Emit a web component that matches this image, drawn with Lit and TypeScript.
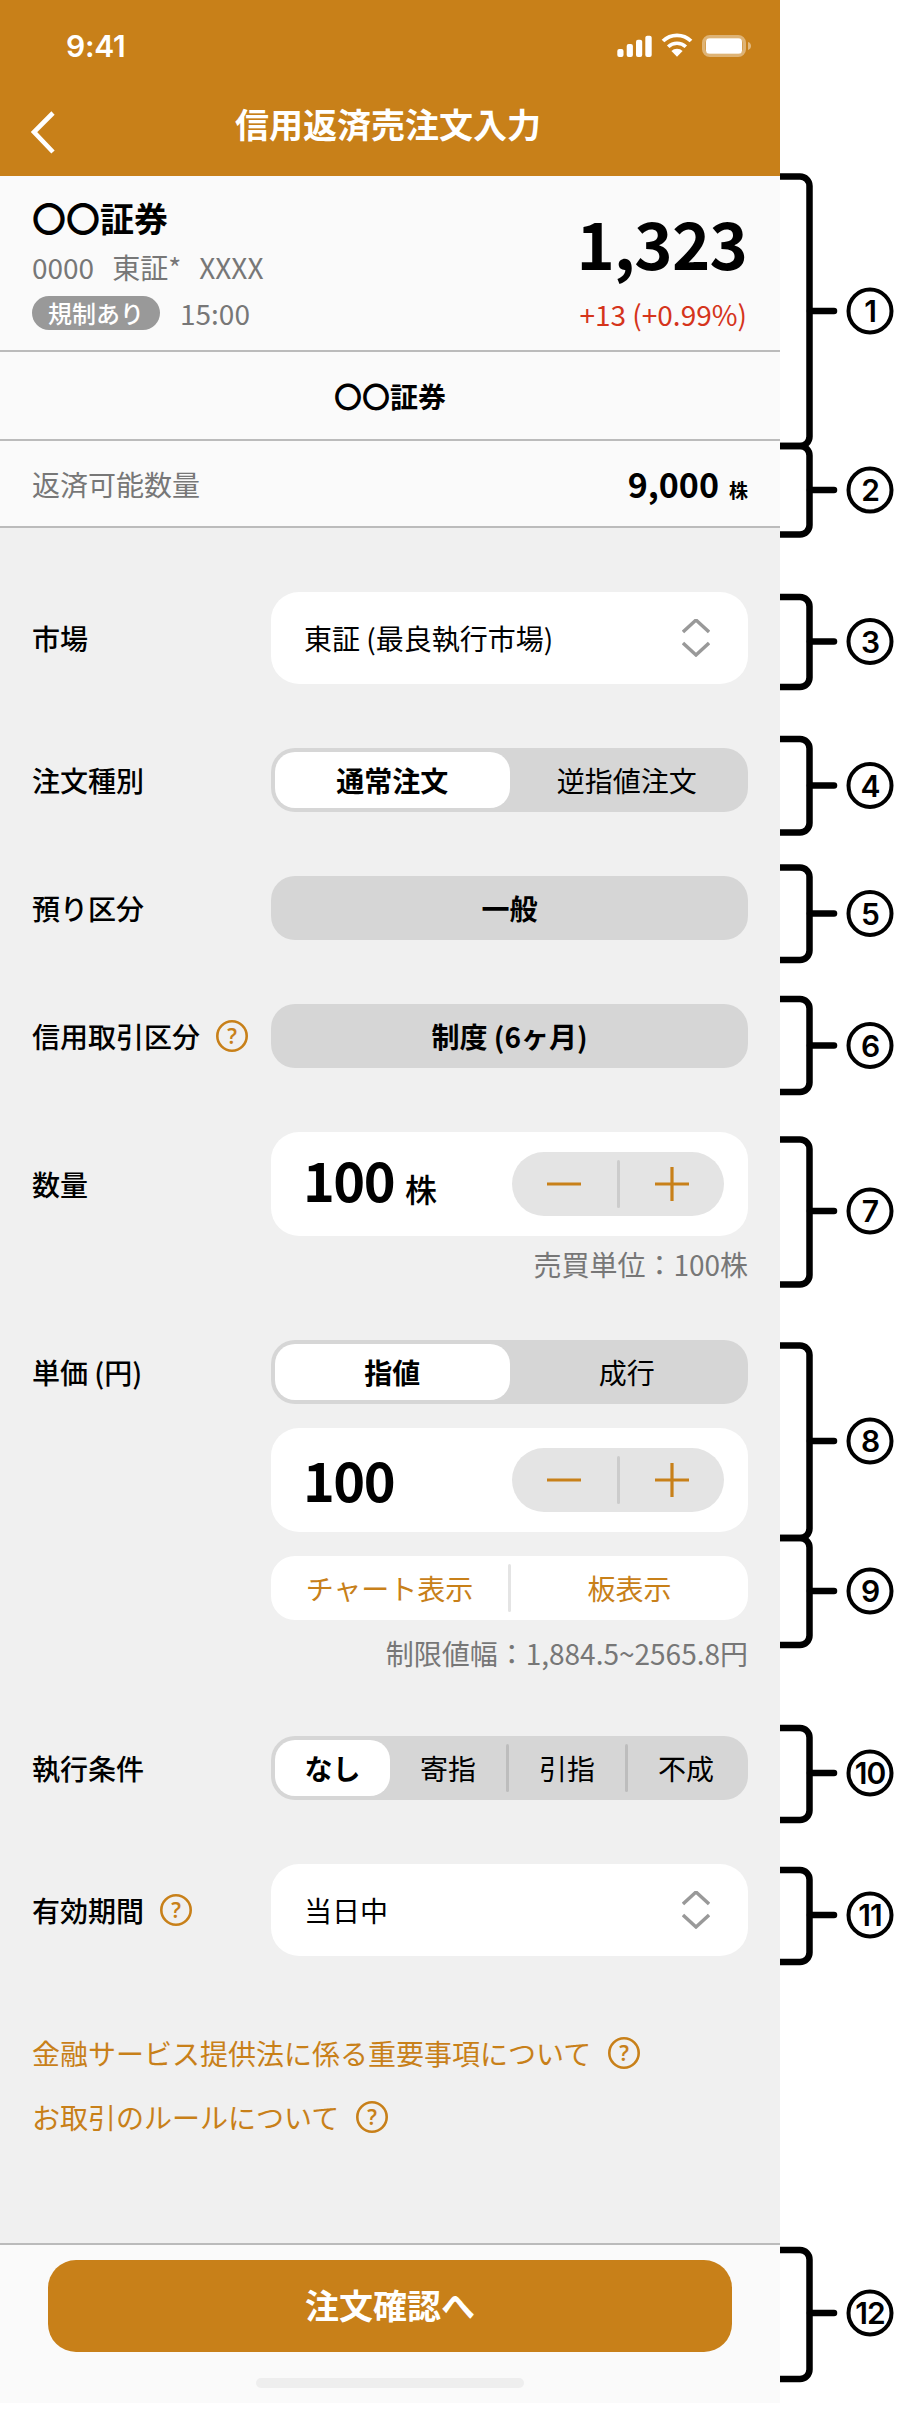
import { LitElement, html, css, svg } from "lit";
import { customElement } from "lit/decorators.js";

const MARKS = [
  { n: "1", t: 176.5, b: 446, m: 311 },
  { n: "2", t: 446, b: 534.5, m: 490 },
  { n: "3", t: 597, b: 687, m: 641.5 },
  { n: "4", t: 739, b: 832.5, m: 785.5 },
  { n: "5", t: 867.5, b: 960, m: 913.5 },
  { n: "6", t: 999, b: 1092, m: 1045.5 },
  { n: "7", t: 1139.5, b: 1284.5, m: 1211 },
  { n: "8", t: 1345.5, b: 1538, m: 1441 },
  { n: "9", t: 1538, b: 1645, m: 1591 },
  { n: "10", t: 1728, b: 1820, m: 1773 },
  { n: "11", t: 1870, b: 1962, m: 1915 },
  { n: "12", t: 2250, b: 2379, m: 2313 },
];

@customElement("app-root")
export class AppRoot extends LitElement {
  static styles = css`
    :host { display: block; width: 916px; height: 2410px; background: #fff; font-family: "Noto Sans CJK JP", "Noto Sans", sans-serif; color: #000; }
    * { box-sizing: border-box; }
    .page { display: flex; align-items: flex-start; }
    .panel { width: 780px; height: 2403px; display: flex; flex-direction: column; background: #f0f0f0; }
    .rail { width: 136px; height: 2410px; flex: none; display: block; }
    .rail .br { fill: none; stroke: #000; stroke-width: 6.5; stroke-linecap: butt; }
    .rail .tick { fill: none; stroke: #000; stroke-width: 6.5; stroke-linecap: round; }
    .rail .ring { fill: #fff; stroke: #000; stroke-width: 4; }
    .rail text { font-family: Inter, sans-serif; font-weight: 600; font-size: 30px; fill: #000; text-anchor: middle; dominant-baseline: central; letter-spacing: -1px; }

    .header { height: 176px; background: #c88019; color: #fff; display: flex; flex-direction: column; flex: none; }
    .status { height: 92px; display: flex; justify-content: space-between; padding: 30px 28px 0 66px; }
    .time { font-family: Inter, sans-serif; font-weight: 600; font-size: 30px; line-height: 32px; letter-spacing: -0.3px; }
    .sys { width: 135px; height: 26px; margin-top: 3px; display: block; flex: none; }
    .nav { height: 84px; display: flex; align-items: flex-start; padding-left: 30px; }
    .back { width: 26px; height: 44px; margin-top: 19px; flex: none; }
    .title { flex: 1; text-align: center; font-size: 34px; font-weight: 700; line-height: 50px; margin: 7px 4px 0 -56px; }

    .quote { background: #fafafa; height: 176px; flex: none; border-bottom: 2px solid #bbb; display: flex; justify-content: space-between; padding: 20px 33px 0 32px; }
    .qleft { display: flex; flex-direction: column; }
    .name { font-size: 34px; font-weight: 700; line-height: 44px; }
    .meta { font-size: 28px; line-height: 36px; color: #777; margin-top: 9px; display: flex; gap: 18px; white-space: pre; }
    .statusrow { display: flex; align-items: center; gap: 20px; margin-top: 11px; color: #777; font-size: 28px; line-height: 34px; }
    .pill { height: 34px; width: 128px; border-radius: 17px; background: #999; color: #fff; font-size: 24px; line-height: 34px; text-align: center; font-weight: 500; }
    .qright { display: flex; flex-direction: column; align-items: flex-end; }
    .price { font-size: 65px; font-weight: 700; line-height: 72px; margin-top: 10px; letter-spacing: -0.8px; }
    .chg { font-size: 28px; line-height: 36px; color: #d5341b; margin-top: 18px; }

    .broker { height: 89px; flex: none; background: #fafafa; border-bottom: 2px solid #bbb; display: flex; align-items: center; justify-content: center; font-size: 28px; font-weight: 700; }
    .avail { height: 87px; flex: none; background: #fafafa; border-bottom: 2px solid #bbb; display: flex; align-items: center; justify-content: space-between; padding: 0 32px; color: #777; font-size: 28px; }
    .avail .v { color: #000; font-weight: 700; font-size: 34px; display: flex; align-items: baseline; gap: 10px; }
    .avail .u { font-size: 19px; }

    .form { flex: 1; display: flex; flex-direction: column; gap: 64px; padding: 64px 32px 0 32px; }
    .row { display: grid; grid-template-columns: 239px 477px; align-items: start; }
    .label { height: 64px; display: flex; align-items: center; gap: 16px; font-size: 28px; font-weight: 500; line-height: 40px; }
    .label.tall { height: 92px; }
    .label.big { height: 104px; }
    .stack { display: flex; flex-direction: column; gap: 24px; }
    .q { width: 32px; height: 32px; flex: none; display: block; }
    .q circle { fill: none; stroke: #c88019; stroke-width: 2.6; }
    .q text { fill: #c88019; font-size: 21px; font-weight: 600; text-anchor: middle; font-family: "Noto Sans", sans-serif; }

    .select { height: 92px; background: #fff; border-radius: 28px; display: flex; align-items: center; justify-content: space-between; padding: 0 38px 0 33px; font-size: 28px; }
    .chev { width: 28px; height: 38px; display: block; }
    .chev path { fill: none; stroke: #999; stroke-width: 3.4; }

    .seg { height: 64px; background: #d6d6d6; border-radius: 24px; padding: 4px; display: flex; align-items: center; font-size: 28px; }
    .opt { flex: 1; height: 56px; display: flex; align-items: center; justify-content: center; }
    .opt.on { background: #fff; border-radius: 20px; font-weight: 700; }
    .opt.w115 { flex: none; width: 115px; }
    .sep { flex: none; width: 3px; height: 48px; border-radius: 2px; background: #bdbdbd; }
    .fixed { height: 64px; background: #d6d6d6; border-radius: 24px; display: flex; align-items: center; justify-content: center; font-size: 28px; font-weight: 700; }

    .num { height: 104px; background: #fff; border-radius: 28px; display: flex; align-items: center; justify-content: space-between; padding: 0 24px 0 32px; }
    .val { font-size: 54px; font-weight: 700; line-height: 64px; display: flex; align-items: baseline; gap: 11px; letter-spacing: -1.5px; margin-top: -2px; }
    .val .u { font-size: 32px; font-weight: 500; letter-spacing: 0; }
    .stepper { width: 212px; height: 64px; border-radius: 32px; background: #e4e4e4; display: flex; align-items: center; }
    .stepper .sep { background: #ccc; }
    .sb { flex: 1; display: flex; align-items: center; justify-content: center; }
    .sb svg { width: 34px; height: 34px; display: block; }
    .sb path { stroke: #c88019; stroke-width: 3.2; fill: none; }

    .links { height: 64px; background: #fff; border-radius: 24px; display: flex; align-items: center; font-size: 28px; color: #c88019; }
    .links .l { flex: 1; text-align: center; }
    .links .sep { background: #e4e4e4; }
    .cap { text-align: right; color: #777; font-size: 28px; }
    .cap.a { line-height: 24px; margin-top: 16px; }
    .cap.b { line-height: 38px; margin-top: -10px; }

    .help { display: flex; flex-direction: column; gap: 24px; margin-top: 13px; }
    .hl { display: flex; align-items: center; gap: 17px; height: 40px; color: #c88019; font-size: 28px; }

    .footer { height: 160px; flex: none; background: #fafafa; border-top: 2px solid #bbb; display: flex; flex-direction: column; align-items: center; padding-top: 15px; }
    .cta { width: 684px; height: 92px; border-radius: 28px; background: #c88019; color: #fff; font-size: 34px; font-weight: 700; line-height: 46px; display: flex; align-items: center; justify-content: center; padding-bottom: 2px; }
    .home { width: 268px; height: 10px; border-radius: 5px; background: #eee; margin-top: 26px; }
  `;

  private q() {
    return html`<svg class="q" viewBox="0 0 32 32"><circle cx="16" cy="16" r="14.7"></circle><text x="16" y="23.5">?</text></svg>`;
  }
  private chev() {
    return html`<svg class="chev" viewBox="0 0 28 38"><path d="M1 13 L14 1 L27 13"></path><path d="M1 24 L14 36 L27 24"></path></svg>`;
  }
  private stepper() {
    return html`<div class="stepper">
      <div class="sb"><svg viewBox="0 0 34 34"><path d="M0 17H34"></path></svg></div>
      <div class="sep"></div>
      <div class="sb"><svg viewBox="0 0 34 34"><path d="M0 17H34M17 0V34"></path></svg></div>
    </div>`;
  }
  private rail() {
    return html`<svg class="rail" viewBox="0 0 136 2410">
      ${MARKS.map(
        (k) => svg`
        <path class="br" d="M0 ${k.t} H20 a9.5 9.5 0 0 1 9.5 9.5 V${k.b - 9.5} a9.5 9.5 0 0 1 -9.5 9.5 H0"></path>
        <path class="tick" d="M30 ${k.m} H54"></path>
        <circle class="ring" cx="90" cy="${k.m}" r="21.5"></circle>
        <text x="90" y="${k.m}">${k.n}</text>`
      )}
    </svg>`;
  }

  render() {
    return html`<div class="page">
      <div class="panel">
        <div class="header">
          <div class="status">
            <div class="time">9:41</div>
            <svg class="sys" viewBox="0 0 135 26">
              <g fill="#fff">
                <rect x="0.3" y="16" width="6.2" height="8" rx="2"></rect>
                <rect x="9.7" y="11" width="6.2" height="13" rx="2"></rect>
                <rect x="19" y="6.7" width="6.2" height="17.3" rx="2"></rect>
                <rect x="28.3" y="2.7" width="6.4" height="21.3" rx="2"></rect>
                <path d="M60 23.7l-5.6-5.6a8 8 0 0 1 11.2 0z"></path>
              </g>
              <g fill="none" stroke="#fff">
                <path d="M51.2 13.8a12.6 12.6 0 0 1 17.6 0" stroke-width="3.6"></path>
                <path d="M46 8a20 20 0 0 1 28 0" stroke-width="3.8"></path>
              </g>
              <rect x="86.8" y="3.8" width="40.4" height="18.4" rx="6" fill="none" stroke="#fff" stroke-opacity=".4" stroke-width="3.6"></rect>
              <rect x="89" y="5.2" width="36" height="15.6" rx="3.5" fill="#fff"></rect>
              <path d="M131 9c2 .6 3 2.2 3 4s-1 3.4-3 4z" fill="#fff" fill-opacity=".45"></path>
            </svg>
          </div>
          <div class="nav">
            <svg class="back" viewBox="0 0 26 44"><path d="M23 2 L4 21 L23 41" fill="none" stroke="#fff" stroke-width="4.6"></path></svg>
            <div class="title">信用返済売注文入力</div>
          </div>
        </div>

        <div class="quote">
          <div class="qleft">
            <div class="name">〇〇証券</div>
            <div class="meta"><span>0000</span><span>東証*</span><span>XXXX</span></div>
            <div class="statusrow"><span class="pill">規制あり</span><span>15:00</span></div>
          </div>
          <div class="qright">
            <div class="price">1,323</div>
            <div class="chg">+13 (+0.99%)</div>
          </div>
        </div>
        <div class="broker">〇〇証券</div>
        <div class="avail"><span>返済可能数量</span><span class="v">9,000<span class="u">株</span></span></div>

        <div class="form">
          <div class="row">
            <div class="label tall">市場</div>
            <div class="select"><span>東証 (最良執行市場)</span>${this.chev()}</div>
          </div>
          <div class="row">
            <div class="label">注文種別</div>
            <div class="seg"><div class="opt on">通常注文</div><div class="opt">逆指値注文</div></div>
          </div>
          <div class="row">
            <div class="label">預り区分</div>
            <div class="fixed">一般</div>
          </div>
          <div class="row">
            <div class="label">信用取引区分${this.q()}</div>
            <div class="fixed">制度 (6ヶ月)</div>
          </div>
          <div class="row">
            <div class="label big">数量</div>
            <div>
              <div class="num"><div class="val">100<span class="u">株</span></div>${this.stepper()}</div>
              <div class="cap a">売買単位：100株</div>
            </div>
          </div>
          <div class="row">
            <div class="label">単価 (円)</div>
            <div class="stack">
              <div class="seg"><div class="opt on">指値</div><div class="opt">成行</div></div>
              <div class="num"><div class="val">100</div>${this.stepper()}</div>
              <div class="links"><div class="l">チャート表示</div><div class="sep"></div><div class="l">板表示</div></div>
              <div class="cap b">制限値幅：1,884.5~2565.8円</div>
            </div>
          </div>
          <div class="row">
            <div class="label">執行条件</div>
            <div class="seg">
              <div class="opt on w115">なし</div>
              <div class="opt">寄指</div><div class="sep"></div>
              <div class="opt">引指</div><div class="sep"></div>
              <div class="opt">不成</div>
            </div>
          </div>
          <div class="row">
            <div class="label tall">有効期間${this.q()}</div>
            <div class="select"><span>当日中</span>${this.chev()}</div>
          </div>
          <div class="help">
            <div class="hl">金融サービス提供法に係る重要事項について${this.q()}</div>
            <div class="hl">お取引のルールについて${this.q()}</div>
          </div>
        </div>

        <div class="footer">
          <div class="cta">注文確認へ</div>
          <div class="home"></div>
        </div>
      </div>
      ${this.rail()}
    </div>`;
  }
}
